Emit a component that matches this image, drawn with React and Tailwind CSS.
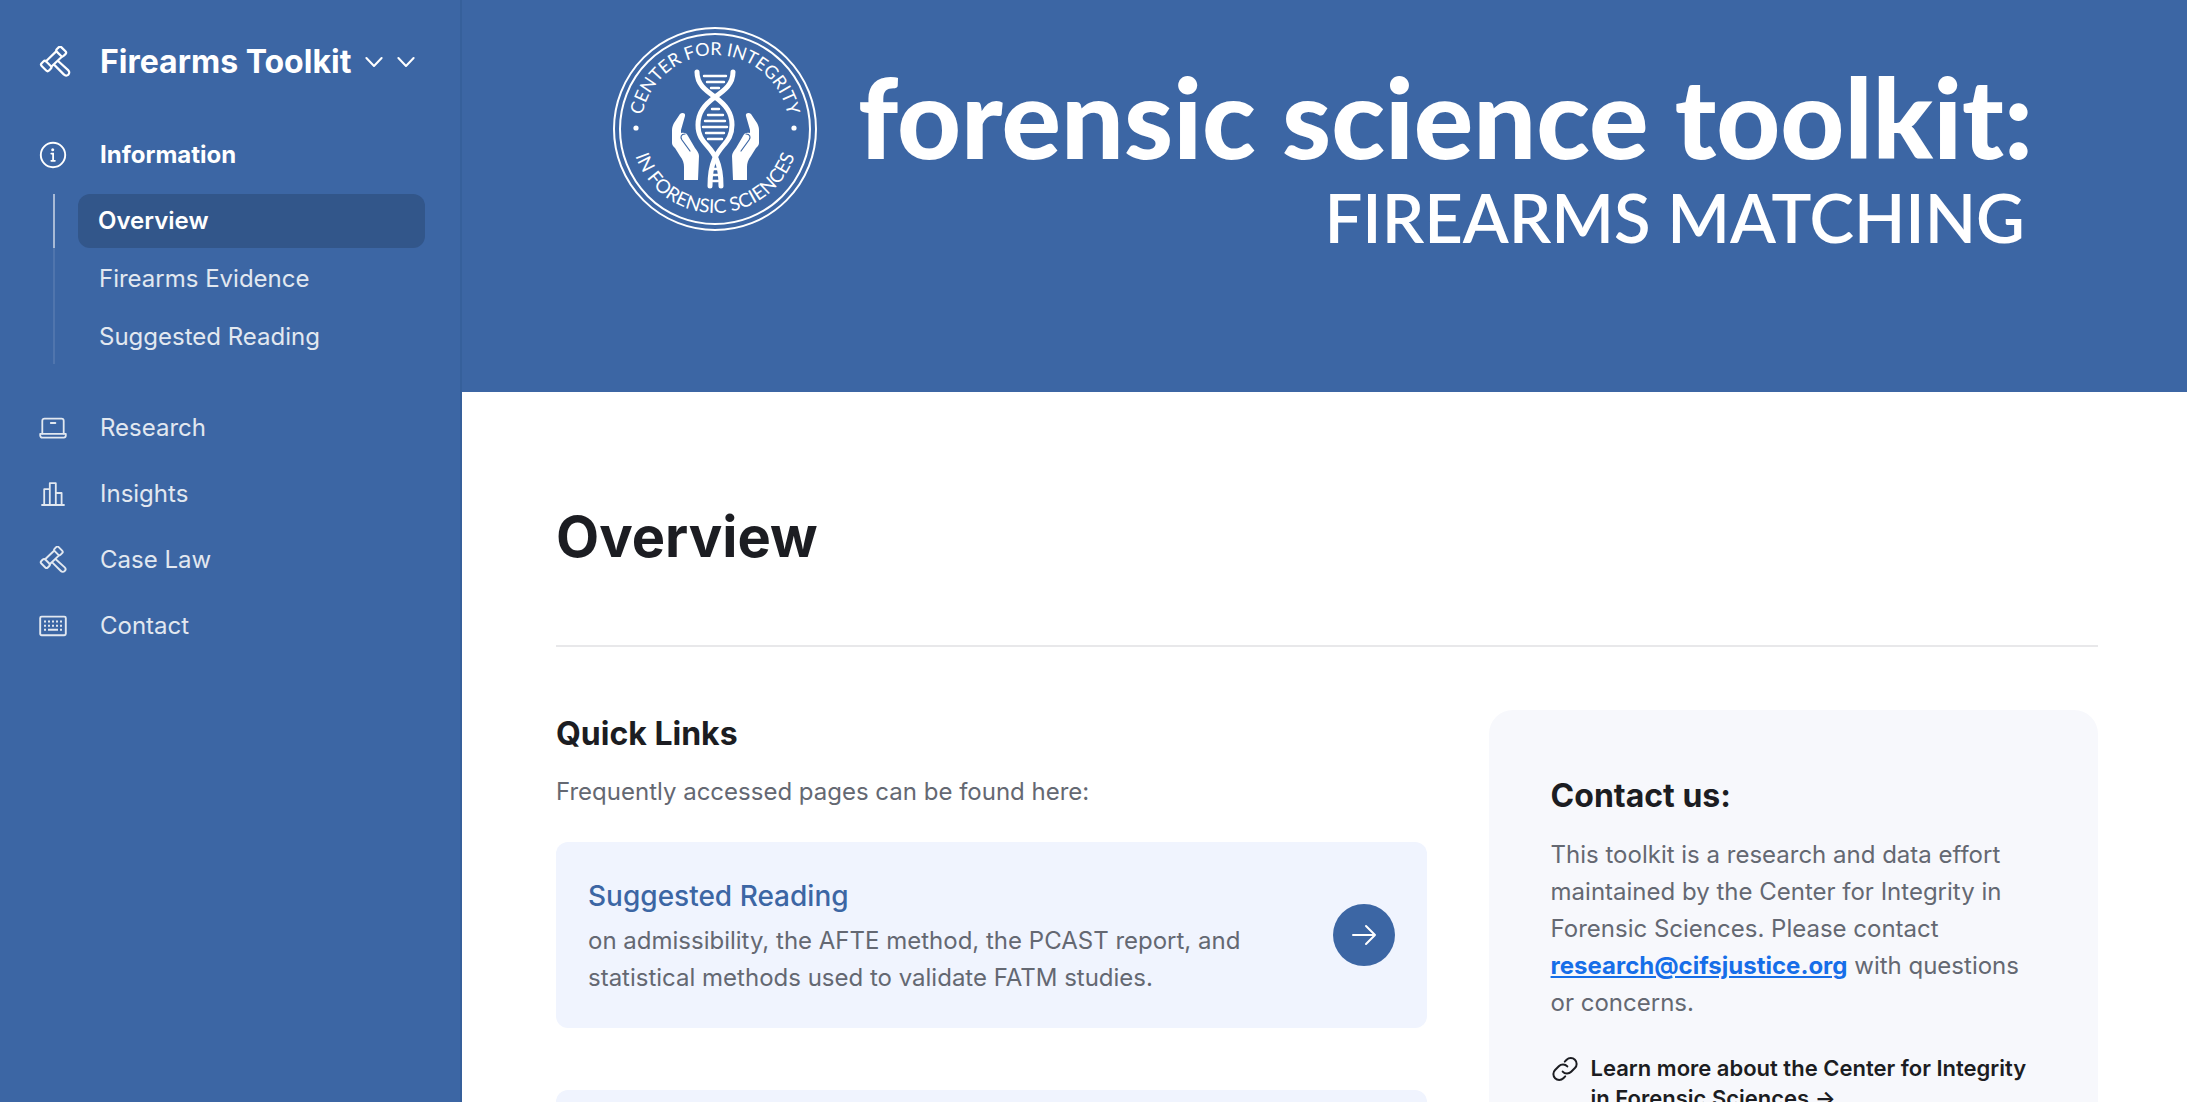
import React from "react";

const sections = [
  { label: "Research", icon: LaptopIcon },
  { label: "Insights", icon: ChartIcon },
  { label: "Case Law", icon: GavelIcon },
  { label: "Contact", icon: KeyboardIcon },
];

function GavelIcon({ className }) {
  return (
    <svg viewBox="0 0 32 32" fill="none" stroke="currentColor" strokeWidth="2.2" strokeLinejoin="round" strokeLinecap="round" className={className}>
      <rect x="-4.8" y="-3.2" width="9.6" height="6.4" rx="2" transform="translate(22.2 5.6) rotate(45)" />
      <rect x="-5.2" y="-3.2" width="10.4" height="6.4" rx="2" transform="translate(7.2 20) rotate(45)" />
      <path d="M17.2 5.4 7 15.2M22.6 11 12.2 20.8M14.8 18.4l10.2 10.2a2.9 2.9 0 0 0 4.4-4.2L18.8 14.8" />
    </svg>
  );
}

function InfoIcon({ className }) {
  return (
    <svg viewBox="0 0 28 28" fill="none" stroke="currentColor" strokeWidth="1.9" strokeLinecap="round" className={className}>
      <circle cx="14" cy="14" r="12.2" />
      <circle cx="13.7" cy="8.8" r="1.5" fill="currentColor" stroke="none" />
      <path d="M12.3 12.6h1.8v7M12.3 19.8h3.6" strokeWidth="1.8" />
    </svg>
  );
}

function LaptopIcon({ className }) {
  return (
    <svg viewBox="0 0 28 28" fill="none" stroke="currentColor" strokeWidth="1.8" strokeLinecap="round" strokeLinejoin="round" className={className}>
      <path d="M3.3 19.6V6.8A2.2 2.2 0 0 1 5.5 4.6h17a2.2 2.2 0 0 1 2.2 2.2v12.8M11.8 9h4.6" />
      <path d="M1.2 19.8h25.6v1.8a2 2 0 0 1-2 2H3.2a2 2 0 0 1-2-2z" />
    </svg>
  );
}

function ChartIcon({ className }) {
  return (
    <svg viewBox="0 0 28 28" fill="none" stroke="currentColor" strokeWidth="1.8" strokeLinecap="round" strokeLinejoin="round" className={className}>
      <path d="M3 25h22M5.2 25V9.2h5.6M10.8 25V3.2h6V25M16.8 13h5.8v12" />
    </svg>
  );
}

function KeyboardIcon({ className }) {
  return (
    <svg viewBox="0 0 28 28" fill="none" stroke="currentColor" strokeWidth="1.9" className={className}>
      <rect x="1.2" y="4.6" width="25.6" height="18.6" rx="1.4" />
      <path d="M5 9.6h18M5 13.7h18" strokeWidth="2" strokeDasharray="2 2" />
      <path d="M5 17.8h2M9 17.8h10M21 17.8h2" strokeWidth="2" />
    </svg>
  );
}

function ChevronIcon({ className }) {
  return (
    <svg viewBox="0 0 18 12" fill="none" stroke="currentColor" strokeWidth="2" strokeLinecap="round" strokeLinejoin="round" className={className}>
      <path d="m1.4 2 7.6 8 7.6-8" />
    </svg>
  );
}

function ArrowIcon({ className }) {
  return (
    <svg viewBox="0 0 28 28" fill="none" stroke="currentColor" strokeWidth="2" strokeLinecap="round" strokeLinejoin="round" className={className}>
      <path d="M3 14h22M16 5l9 9-9 9" />
    </svg>
  );
}

function LinkIcon({ className }) {
  return (
    <svg viewBox="0 0 24 24" fill="none" stroke="currentColor" strokeWidth="1.7" strokeLinecap="round" strokeLinejoin="round" className={className}>
      <path d="M10 14.2a5 5 0 0 0 7.3.2l3.2-3.2a5 5 0 0 0-7.1-7.1l-1.6 1.6" />
      <path d="M14 9.8a5 5 0 0 0-7.3-.2l-3.2 3.2a5 5 0 0 0 7.1 7.1l1.6-1.6" />
    </svg>
  );
}

function Hand() {
  return (
    <g>
      <path
        d="M68 88c2-2 6-1 5 2l-4 14v3c3-1 6 0 7 3l7 12c2 3 4 5 4 8l-1 24H72v-13c0-4-1-7-4-11l-5-8c-2-2-3-3-3-5v-13c0-3 1-5 2-7z"
        fill="currentColor"
      />
      <path d="M78 125l-8-11c-2-3-1-6 3-6" fill="none" stroke="#3c66a4" strokeWidth="1.2" strokeLinecap="round" />
    </g>
  );
}

function Seal({ className }) {
  return (
    <svg viewBox="0 0 206 206" className={className} role="img" aria-label="Center for Integrity in Forensic Sciences">
      <defs>
        <path id="seal-top" d="M29 103a74 74 0 0 1 148 0" />
        <path id="seal-bottom" d="M19 103a84 84 0 0 0 168 0" />
      </defs>
      <circle cx="103" cy="103" r="101" fill="none" stroke="currentColor" strokeWidth="2" />
      <circle cx="103" cy="103" r="95" fill="none" stroke="currentColor" strokeWidth="2" />
      <g fill="currentColor" fontFamily="Lato, sans-serif" textAnchor="middle">
        <text fontSize="18">
          <textPath href="#seal-top" startOffset="50%">CENTER FOR INTEGRITY</textPath>
        </text>
        <text fontSize="19">
          <textPath href="#seal-bottom" startOffset="50%">IN FORENSIC SCIENCES</textPath>
        </text>
      </g>
      <circle cx="24" cy="102" r="2.6" fill="currentColor" />
      <circle cx="182" cy="102" r="2.6" fill="currentColor" />
      <g fill="none" stroke="currentColor" strokeWidth="5" strokeLinecap="round">
        <path d="M85 46c0 12 8 18 18 25 11 8 17 16 17 28 0 24-22 18-22 61" />
        <path d="M121 46c0 12-8 18-18 25-11 8-17 16-17 28 0 24 23 18 23 61" />
      </g>
      <path
        d="M92 50h22M95 56h17M99 62h8M100 83h7M96 89h15M93 95h20M91 101h24M94 107h18M96 113h14M101 143h4M101 149h5M101 155h5"
        fill="none"
        stroke="currentColor"
        strokeWidth="2.4"
        strokeLinecap="round"
      />
      <Hand />
      <g transform="translate(207 0) scale(-1 1)">
        <Hand />
      </g>
    </svg>
  );
}

function Sidebar() {
  return (
    <aside className="w-[462px] shrink-0 border-r-2 border-[#36609b] pt-10 pr-[35px] pl-[39px] text-[24px] text-slate-200">
      <div className="flex items-center text-white">
        <GavelIcon className="h-8 w-8" />
        <button type="button" className="ml-[29px] flex items-center gap-[14px] text-[32px] leading-11 font-bold">
          Firearms Toolkit
          <ChevronIcon className="h-3 w-[18px]" />
        </button>
        <button type="button" aria-label="Switch toolkit" className="ml-[14px]">
          <ChevronIcon className="h-3 w-[18px]" />
        </button>
      </div>

      <nav className="mt-[49px]">
        <a href="#information" className="flex items-center gap-[33px] leading-11 font-bold text-white">
          <InfoIcon className="h-7 w-7" />
          Information
        </a>
        <div className="mt-[17px] ml-[14px] border-l-2 border-white/10">
          <a href="#overview" className="-ml-[2px] block border-l-2 border-white/50 pl-[23px] font-semibold text-white">
            <span className="block rounded-xl bg-[#32568a] px-5 leading-[54px]">Overview</span>
          </a>
          <a href="#evidence" className="mt-1 block pl-11 leading-[54px]">Firearms Evidence</a>
          <a href="#reading" className="mt-1 block pl-11 leading-[54px]">Suggested Reading</a>
        </div>
        <ul className="mt-[42px] space-y-[22px]">
          {sections.map(({ label, icon: Icon }) => (
            <li key={label}>
              <a href="#section" className="flex items-center gap-[33px] leading-11">
                <Icon className="h-7 w-7" />
                {label}
              </a>
            </li>
          ))}
        </ul>
      </nav>
    </aside>
  );
}

function Banner() {
  return (
    <header className="flex h-98 items-start justify-center gap-10 bg-[#3c66a4] pt-6 pr-1 text-white">
      <Seal className="mt-[2px] w-[206px] shrink-0" />
      <div className="pt-8 text-right whitespace-nowrap">
        <p className="font-[Lato,sans-serif] text-[111px] leading-[120px] font-black">forensic science toolkit:</p>
        <p className="pr-2 font-[Lato,sans-serif] text-[67px] leading-[82px] font-semibold">FIREARMS MATCHING</p>
      </div>
    </header>
  );
}

function QuickLinks() {
  return (
    <section>
      <h2 className="text-[32px] leading-12 font-bold text-[#1c1d22]">Quick Links</h2>
      <p className="mt-4 leading-9">Frequently accessed pages can be found here:</p>
      <div className="mt-8 space-y-[62px]">
        <div className="flex items-center justify-between gap-8 rounded-xl bg-[#f0f4fe] p-8">
          <div className="max-w-[680px]">
            <h3 className="text-[28px] leading-11 font-medium text-[#3c66a4]">Suggested Reading</h3>
            <p className="mt-1 leading-[37px]">
              on admissibility, the AFTE method, the PCAST report, and statistical methods used to validate FATM studies.
            </p>
          </div>
          <a href="#reading" aria-label="Suggested Reading" className="flex h-[62px] w-[62px] shrink-0 items-center justify-center rounded-full bg-[#3c66a4] text-white">
            <ArrowIcon className="h-7 w-7" />
          </a>
        </div>
        <div className="h-48 rounded-xl bg-[#f0f4fe]" />
      </div>
    </section>
  );
}

function ContactCard() {
  return (
    <section className="rounded-3xl bg-[#f7f8fc] px-[62px] py-[62px]">
      <h2 className="text-[32px] leading-12 font-bold text-[#1c1d22]">Contact us:</h2>
      <p className="mt-4 leading-[37px]">
        This toolkit is a research and data effort maintained by the Center for Integrity in Forensic Sciences. Please contact{" "}
        <a href="mailto:research@cifsjustice.org" className="font-bold text-[#166ee8] underline">research@cifsjustice.org</a>{" "}
        with questions or concerns.
      </p>
      <a href="#cifs" className="mt-8 flex gap-3 text-[22px] leading-[30px] font-semibold text-[#1c1d22]">
        <LinkIcon className="mt-[2px] h-7 w-7 shrink-0" />
        <span>Learn more about the Center for Integrity in Forensic Sciences →</span>
      </a>
    </section>
  );
}

export default function App() {
  return (
    <div className="flex h-screen overflow-hidden bg-[#3c66a4] font-[Inter,sans-serif]">
      <Sidebar />
      <div className="min-w-0 flex-1 overflow-hidden bg-white">
        <Banner />
        <main className="pr-[89px] pl-[94px] text-[24px] text-[#646872]">
          <h1 className="border-b-2 border-[#e8e8ea] pt-[105px] pb-[68px] text-[56px] leading-20 font-bold text-[#1c1d22]">Overview</h1>
          <div className="mt-[63px] grid grid-cols-[10fr_7fr] items-start gap-[62px]">
            <QuickLinks />
            <ContactCard />
          </div>
        </main>
      </div>
    </div>
  );
}
